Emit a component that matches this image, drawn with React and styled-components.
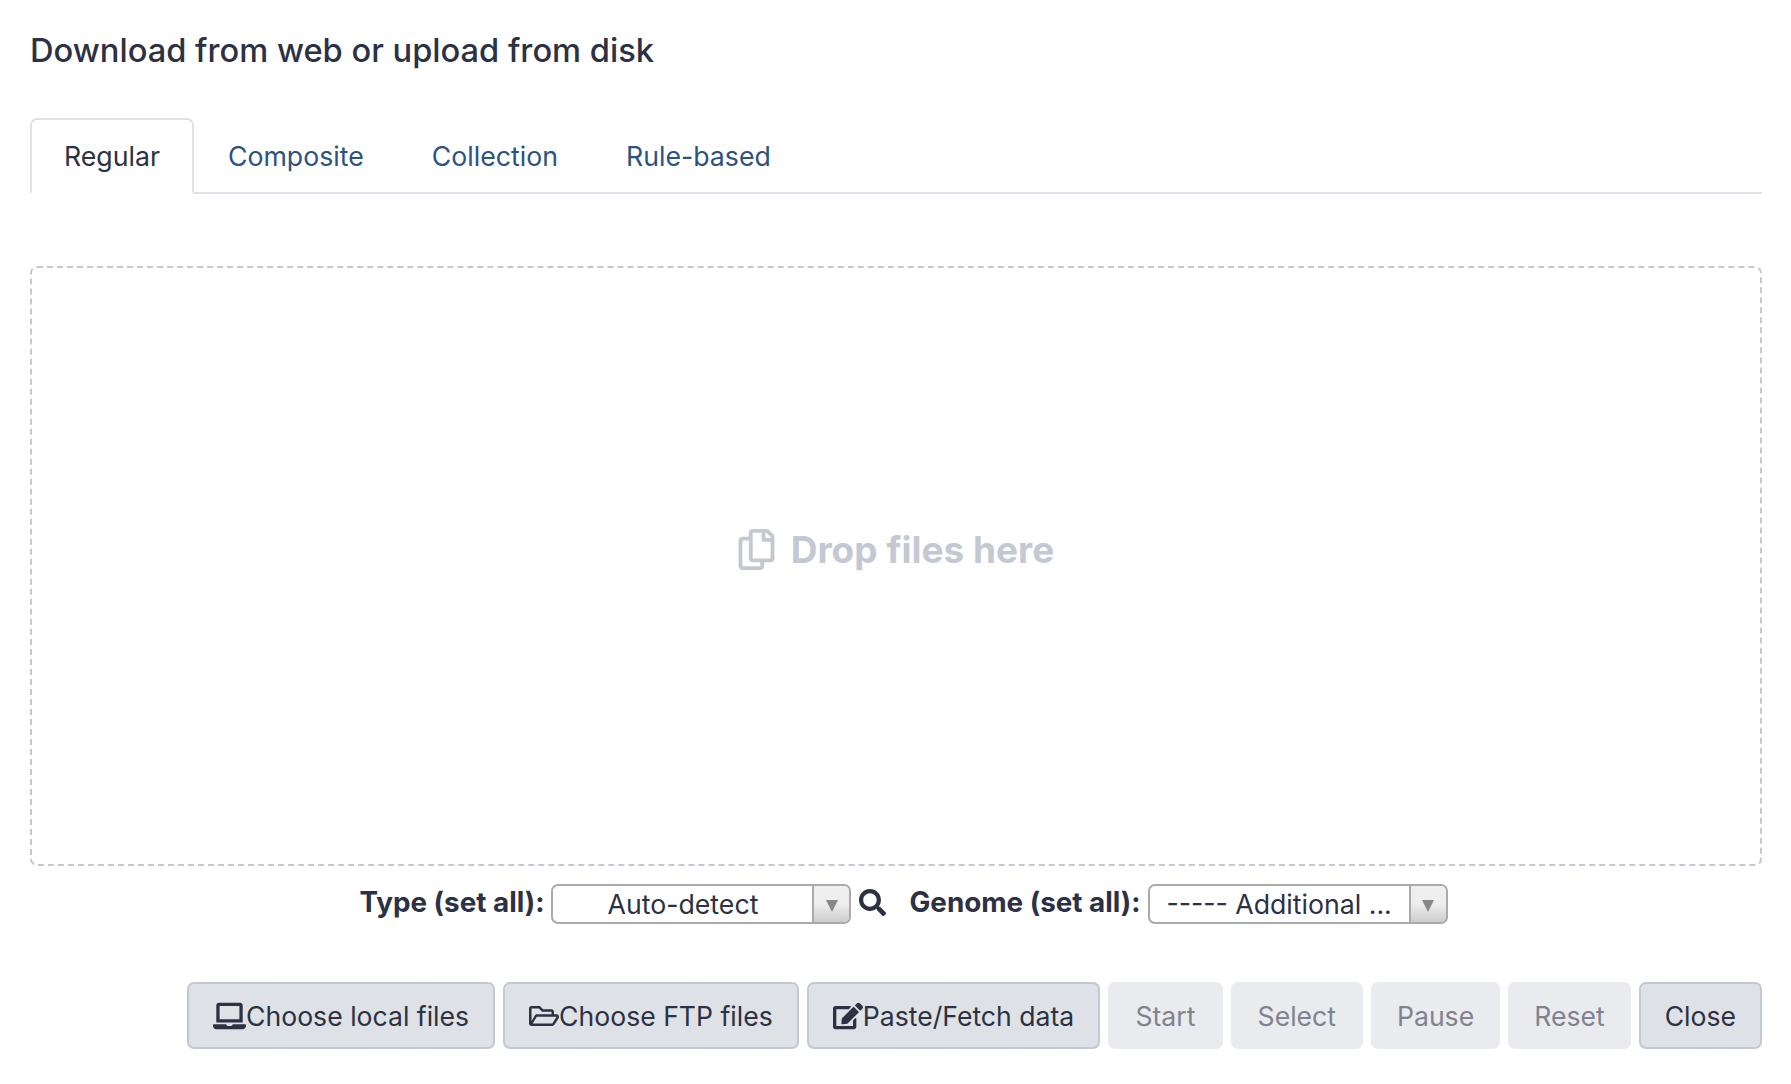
import React from "react";
import styled, { createGlobalStyle, css } from "styled-components";
import { FaLaptop, FaRegFolderOpen, FaEdit, FaSearch, FaRegCopy } from "react-icons/fa";

const Global = createGlobalStyle`
  html, body { margin: 0; padding: 0; background: #fff; }
  body { font-family: Inter, "Liberation Sans", sans-serif; color: #2c3143; }
`;

const Page = styled.div`
  width: 1791px;
  height: 1084px;
  box-sizing: border-box;
  padding: 30px 29px 0 30px;
  overflow: hidden;
`;

const Title = styled.h4`
  margin: 0 0 48px;
  font-size: 32.65px;
  line-height: 40px;
  font-weight: 500;
  color: #2c3143;
`;

const Tabs = styled.nav`
  display: flex;
  height: 76px;
  box-sizing: border-box;
  border-bottom: 2px solid #dee2e8;
`;

const Tab = styled.div`
  box-sizing: border-box;
  height: 76px;
  padding: 0 32px;
  display: flex;
  align-items: center;
  font-size: 26.7px;
  color: ${(p) => (p.$active ? "#2c3143" : "#2c5380")};
  border: 2px solid ${(p) => (p.$active ? "#dee2e8" : "transparent")};
  border-bottom-color: ${(p) => (p.$active ? "#fff" : "transparent")};
  border-radius: 7px 7px 0 0;
`;

const Dropzone = styled.div`
  box-sizing: border-box;
  margin-top: 72px;
  height: 600px;
  border: 2px dashed #c3c8d2;
  border-radius: 7px;
  display: flex;
  align-items: center;
  justify-content: center;
  gap: 16px;
  color: #c3c8d2;
  font-size: 37px;
  font-weight: 700;
  padding-bottom: 34px;
`;

const DropIcon = styled(FaRegCopy)`
  width: 37px;
  height: 41px;
`;

const Selectors = styled.div`
  display: flex;
  justify-content: center;
  align-items: center;
  margin-top: 18px;
  height: 40px;
  padding-left: 15px;
`;

const Label = styled.span`
  font-size: 27.8px;
  font-weight: 700;
  color: #2c3143;
  margin-right: 7px;
  position: relative;
  top: -2px;
`;

const Select = styled.div`
  box-sizing: border-box;
  width: 300px;
  height: 40px;
  border: 2px solid #aaa;
  border-radius: 7px;
  background: #fff;
  display: flex;
  overflow: hidden;
`;

const SelectText = styled.span`
  flex: 1;
  text-align: center;
  font-size: 26.7px;
  line-height: 37px;
  color: #2c3143;
  white-space: nowrap;
`;

const Arrow = styled.span`
  width: 35px;
  border-left: 2px solid #aaa;
  background: linear-gradient(#eee 50%, #ccc);
  display: flex;
  align-items: center;
  justify-content: center;
  &::after {
    content: "";
    border-left: 6px solid transparent;
    border-right: 6px solid transparent;
    border-top: 12px solid #888;
    margin-top: 3px;
  }
`;

const SearchIcon = styled(FaSearch)`
  width: 27px;
  height: 27px;
  margin: 0 23px 4px 8px;
  color: #2c3143;
`;

const Buttons = styled.div`
  display: flex;
  justify-content: flex-end;
  gap: 8px;
  margin-top: 58px;
`;

const Button = styled.button`
  box-sizing: border-box;
  height: 67px;
  padding: 0 ${(p) => p.$pad || 24}px;
  display: flex;
  align-items: center;
  font-family: inherit;
  font-size: 26.6px;
  border-radius: 7px;
  border: 2px solid ${(p) => (p.$disabled ? "#e9ebef" : "#c3c9d3")};
  background: ${(p) => (p.$disabled ? "#e9ebef" : "#dee1e6")};
  color: ${(p) => (p.$disabled ? "#80838e" : "#2c3143")};
`;

const iconBase = css`
  height: 30px;
  flex: none;
`;
const LaptopIcon = styled(FaLaptop)`${iconBase} width: 33px;`;
const FolderIcon = styled(FaRegFolderOpen)`${iconBase} width: 30px;`;
const EditIcon = styled(FaEdit)`${iconBase} width: 30px;`;

export default function App() {
  return (
    <Page>
      <Global />
      <Title>Download from web or upload from disk</Title>
      <Tabs>
        <Tab $active>Regular</Tab>
        <Tab>Composite</Tab>
        <Tab>Collection</Tab>
        <Tab>Rule-based</Tab>
      </Tabs>
      <Dropzone>
        <DropIcon />
        <span>Drop files here</span>
      </Dropzone>
      <Selectors>
        <Label>Type (set all):</Label>
        <Select>
          <SelectText>Auto-detect</SelectText>
          <Arrow />
        </Select>
        <SearchIcon />
        <Label>Genome (set all):</Label>
        <Select>
          <SelectText>----- Additional ...</SelectText>
          <Arrow />
        </Select>
      </Selectors>
      <Buttons>
        <Button><LaptopIcon />Choose local files</Button>
        <Button><FolderIcon />Choose FTP files</Button>
        <Button><EditIcon />Paste/Fetch data</Button>
        <Button $disabled $pad={25.2}>Start</Button>
        <Button $disabled $pad={25}>Select</Button>
        <Button $disabled>Pause</Button>
        <Button $disabled>Reset</Button>
        <Button>Close</Button>
      </Buttons>
    </Page>
  );
}
